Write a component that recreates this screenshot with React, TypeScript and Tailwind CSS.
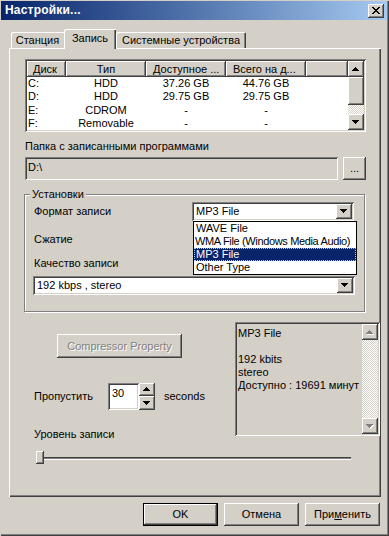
import React from "react";

const raised =
  "shadow-[inset_-1px_-1px_#404040,inset_1px_1px_#fff,inset_-2px_-2px_#808080,inset_2px_2px_#d4d0c8]";
const sunken =
  "shadow-[inset_1px_1px_#808080,inset_-1px_-1px_#fff,inset_2px_2px_#404040,inset_-2px_-2px_#d4d0c8]";
const headerCell = "shadow-[inset_-1px_-1px_#404040,inset_1px_1px_#fff,inset_-2px_-2px_#808080]";

function Down({ gray = false }: { gray?: boolean }) {
  return (
    <svg width="8" height="5" viewBox="0 0 8 5" shapeRendering="crispEdges">
      {gray && <path d="M1 1h7v1h-1v1h-1v1h-1v1h-1v-1h-1v-1h-1v-1h-1z" fill="#fff" />}
      <path d="M0 0h7v1h-1v1h-1v1h-1v1h-1v-1h-1v-1h-1v-1h-1z" fill={gray ? "#808080" : "#000"} />
    </svg>
  );
}
function Up({ gray = false }: { gray?: boolean }) {
  return (
    <svg width="8" height="5" viewBox="0 0 8 5" shapeRendering="crispEdges">
      {gray && <path d="M1 5h7v-1h-1v-1h-1v-1h-1v-1h-1v1h-1v1h-1v1h-1z" fill="#fff" />}
      <path d="M0 4h7v-1h-1v-1h-1v-1h-1v-1h-1v1h-1v1h-1v1h-1z" fill={gray ? "#808080" : "#000"} />
    </svg>
  );
}

function ScrollBtn({ children }: { children: React.ReactNode }) {
  return (
    <div className={`w-[16px] h-[16px] bg-[#d4d0c8] flex items-center justify-center ${raised}`}>
      {children}
    </div>
  );
}

const dither =
  "bg-[repeating-conic-gradient(#fff_0_25%,#d4d0c8_0_50%)] [background-size:2px_2px]";

function Combo({ text, className }: { text: string; className: string }) {
  return (
    <div className={`h-[19px] bg-white flex items-center p-[2px] ${sunken} ${className}`}>
      <span className="flex-1 pl-[2px] whitespace-nowrap overflow-hidden">{text}</span>
      <div className={`w-[16px] h-[15px] bg-[#d4d0c8] flex items-center justify-center ${raised}`}>
        <Down />
      </div>
    </div>
  );
}

const rows = [
  ["C:", "HDD", "37.26 GB", "44.76 GB"],
  ["D:", "HDD", "29.75 GB", "29.75 GB"],
  ["E:", "CDROM", "-", "-"],
  ["F:", "Removable", "-", "-"],
];

export default function App() {
  return (
    <div className="w-[389px] h-[536px] bg-[#d4d0c8] font-['Liberation_Sans',Arial,sans-serif] text-[11px] leading-[13px] text-black flex flex-col overflow-hidden shadow-[inset_1px_1px_#d4d0c8,inset_-1px_-1px_#404040,inset_-2px_-2px_#808080]">
      {/* Title bar */}
      <div className="ml-[1px] mr-[2px] mt-[1px] h-[19px] bg-gradient-to-r from-[#0a246a] to-[#a6caf0] flex items-center pl-[4px] pr-[3px]">
        <span className="text-white font-bold text-[12px] tracking-[0.2px]">Настройки...</span>
        <div className={`ml-auto w-[16px] h-[14px] bg-[#d4d0c8] flex items-center justify-center ${raised}`}>
          <svg width="8" height="7" viewBox="0 0 8 7" shapeRendering="crispEdges">
            <path d="M0 0h2v1h1v1h2v-1h1v-1h2v1h-1v1h-1v1h-1v1h1v1h1v1h1v1h-2v-1h-1v-1h-2v1h-1v1h-2v-1h1v-1h1v-1h1v-1h-1v-1h-1v-1h-1z" fill="#000" />
          </svg>
        </div>
      </div>

      {/* Tabs */}
      <div className="mt-[9px] flex items-end pl-[11px] h-[19px]">
        <div className="w-[53px] h-[16px] flex items-center justify-center rounded-tl-[2px] shadow-[inset_1px_1px_#fff]">
          Станция
        </div>
        <div className="relative z-10 w-[52px] h-[20px] -mb-[1px] bg-[#d4d0c8] flex items-start pt-[3px] justify-center rounded-tl-[2px] shadow-[inset_1px_1px_#fff,inset_-1px_0_#404040,inset_-2px_0_#808080]">
          Запись
        </div>
        <div className="w-[130px] h-[16px] flex items-center justify-center rounded-t-[2px] shadow-[inset_1px_1px_#fff,inset_-1px_0_#404040,inset_-2px_0_#808080]">
          Системные устройства
        </div>
      </div>

      {/* Tab panel */}
      <div className="ml-[9px] w-[372px] h-[449px] flex flex-col shadow-[inset_1px_1px_#fff,inset_-1px_-1px_#404040,inset_-2px_-2px_#808080]">
        {/* List view */}
        <div className={`ml-[16px] mt-[11px] w-[341px] h-[73px] bg-white p-[2px] flex ${sunken}`}>
          <div className="flex-1 flex flex-col overflow-hidden">
            <div className="flex h-[17px] bg-[#d4d0c8]">
              <div className={`w-[39px] flex items-center pl-[6px] ${headerCell}`}>Диск</div>
              <div className={`w-[80px] flex items-center justify-center ${headerCell}`}>Тип</div>
              <div className={`w-[80px] flex items-center pl-[7px] whitespace-nowrap ${headerCell}`}>Доступное ...</div>
              <div className={`w-[80px] flex items-center pl-[7px] whitespace-nowrap ${headerCell}`}>Всего на д...</div>
              <div className={`flex-1 ${headerCell}`}></div>
            </div>
            {rows.map((r) => (
              <div key={r[0]} className="flex h-[14px] items-center">
                <div className="w-[39px] pl-[1px]">{r[0]}</div>
                <div className="w-[80px] text-center">{r[1]}</div>
                <div className="w-[80px] text-center">{r[2]}</div>
                <div className="w-[80px] text-center">{r[3]}</div>
              </div>
            ))}
          </div>
          <div className="w-[16px] flex flex-col">
            <ScrollBtn><Up /></ScrollBtn>
            <div className={`h-[28px] bg-[#d4d0c8] ${raised}`}></div>
            <div className={`flex-1 ${dither}`}></div>
            <ScrollBtn><Down /></ScrollBtn>
          </div>
        </div>

        {/* Folder */}
        <div className="ml-[16px] mt-[8px] h-[13px]">Папка с записанными программами</div>
        <div className="ml-[16px] mt-[4px] flex gap-[5px] h-[23px]">
          <div className={`w-[313px] h-[23px] bg-[#d4d0c8] pl-[3px] pt-[4px] ${sunken}`}>D:\</div>
          <div className={`w-[23px] h-[23px] bg-[#d4d0c8] flex items-end justify-center pb-[6px] ${raised}`}>
            <span className="leading-none">...</span>
          </div>
        </div>

        {/* Group box */}
        <div className="ml-[15px] mt-[14px] w-[341px] h-[118px] border border-[#808080] shadow-[1px_1px_#fff,inset_1px_1px_#fff] flex flex-col relative">
          <div className="-mt-[7px] ml-[5px] px-[2px] self-start bg-[#d4d0c8] h-[13px]">Установки</div>
          <div className="relative mt-[1px] flex items-center h-[19px]">
            <span className="ml-[9px]">Формат записи</span>
            <Combo text="MP3 File" className="ml-auto mr-[10px] w-[162px]" />
            {/* dropdown */}
            <div className="absolute left-[168px] top-[19px] w-[164px] h-[54px] bg-white border border-black z-20 flex flex-col">
              <div className="h-[13px] pl-[2px] whitespace-nowrap overflow-hidden">WAVE File</div>
              <div className="h-[13px] pl-[1px] whitespace-nowrap overflow-hidden tracking-[-0.35px]">WMA File (Windows Media Audio)</div>
              <div className="h-[14px] pl-[1px] bg-[#0a246a] text-white border border-dotted border-[#a6caf0] flex items-center whitespace-nowrap overflow-hidden">MP3 File</div>
              <div className="h-[13px] pl-[2px] whitespace-nowrap overflow-hidden">Other Type</div>
            </div>
          </div>
          <div className="ml-[9px] mt-[12px] h-[13px]">Сжатие</div>
          <div className="ml-[9px] mt-[11px] h-[13px]">Качество записи</div>
          <Combo text="192 kbps , stereo" className="ml-[8px] mt-[6px] w-[322px]" />
        </div>

        {/* Lower area */}
        <div className="ml-[16px] mt-[10px] flex">
          <div className="flex-1 flex flex-col">
            <div className={`ml-[32px] mt-[12px] w-[125px] h-[24px] bg-[#d4d0c8] flex items-center justify-center text-[#808080] [text-shadow:1px_1px_#fff] ${raised}`}>
              Compressor Property
            </div>
            <div className="mt-[25px] flex items-center h-[27px]">
              <span className="ml-[9px] w-[74px]">Пропустить</span>
              <div className={`w-[31px] h-[27px] bg-white pl-[4px] pt-[4px] ${sunken}`}>30</div>
              <div className="w-[16px] h-[27px] flex flex-col">
                <div className={`h-[13px] bg-[#d4d0c8] flex items-center justify-center ${raised}`}><Up /></div>
                <div className={`h-[14px] bg-[#d4d0c8] flex items-center justify-center ${raised}`}><Down /></div>
              </div>
              <span className="ml-[9px]">seconds</span>
            </div>
            <div className="ml-[9px] mt-[18px] h-[13px]">Уровень записи</div>
          </div>
          <div className={`w-[145px] h-[114px] mr-[1px] bg-[#d4d0c8] p-[2px] flex ${sunken}`}>
            <div className="flex-1 pl-[1px] pt-[3px] flex flex-col whitespace-nowrap overflow-hidden">
              <div className="h-[13px]">MP3 File</div>
              <div className="h-[13px]"></div>
              <div className="h-[13px]">192 kbits</div>
              <div className="h-[13px]">stereo</div>
              <div className="h-[13px]">Доступно : 19691 минут</div>
            </div>
            <div className="w-[16px] flex flex-col">
              <ScrollBtn><Up gray /></ScrollBtn>
              <div className={`flex-1 ${dither}`}></div>
              <ScrollBtn><Down gray /></ScrollBtn>
            </div>
          </div>
        </div>

        {/* Slider */}
        <div className="ml-[27px] mt-[10px] w-[315px] h-[13px] relative flex items-center">
          <div className="w-full h-[2px] bg-[#808080] shadow-[0_1px_#fff,inset_0_1px_#404040]"></div>
          <div className={`absolute left-0 top-0 w-[8px] h-[13px] bg-[#d4d0c8] ${raised}`}></div>
        </div>
      </div>

      {/* Bottom buttons */}
      <div className="mt-[6px] flex justify-end gap-[6px] pr-[9px]">
        <div className={`w-[75px] h-[23px] border border-black bg-[#d4d0c8] flex items-center justify-center ${raised}`}>OK</div>
        <div className={`w-[75px] h-[23px] bg-[#d4d0c8] flex items-center justify-center ${raised}`}>Отмена</div>
        <div className={`w-[75px] h-[23px] bg-[#d4d0c8] flex items-center justify-center ${raised}`}>
          <span>При<span className="underline">м</span>енить</span>
        </div>
      </div>
    </div>
  );
}
